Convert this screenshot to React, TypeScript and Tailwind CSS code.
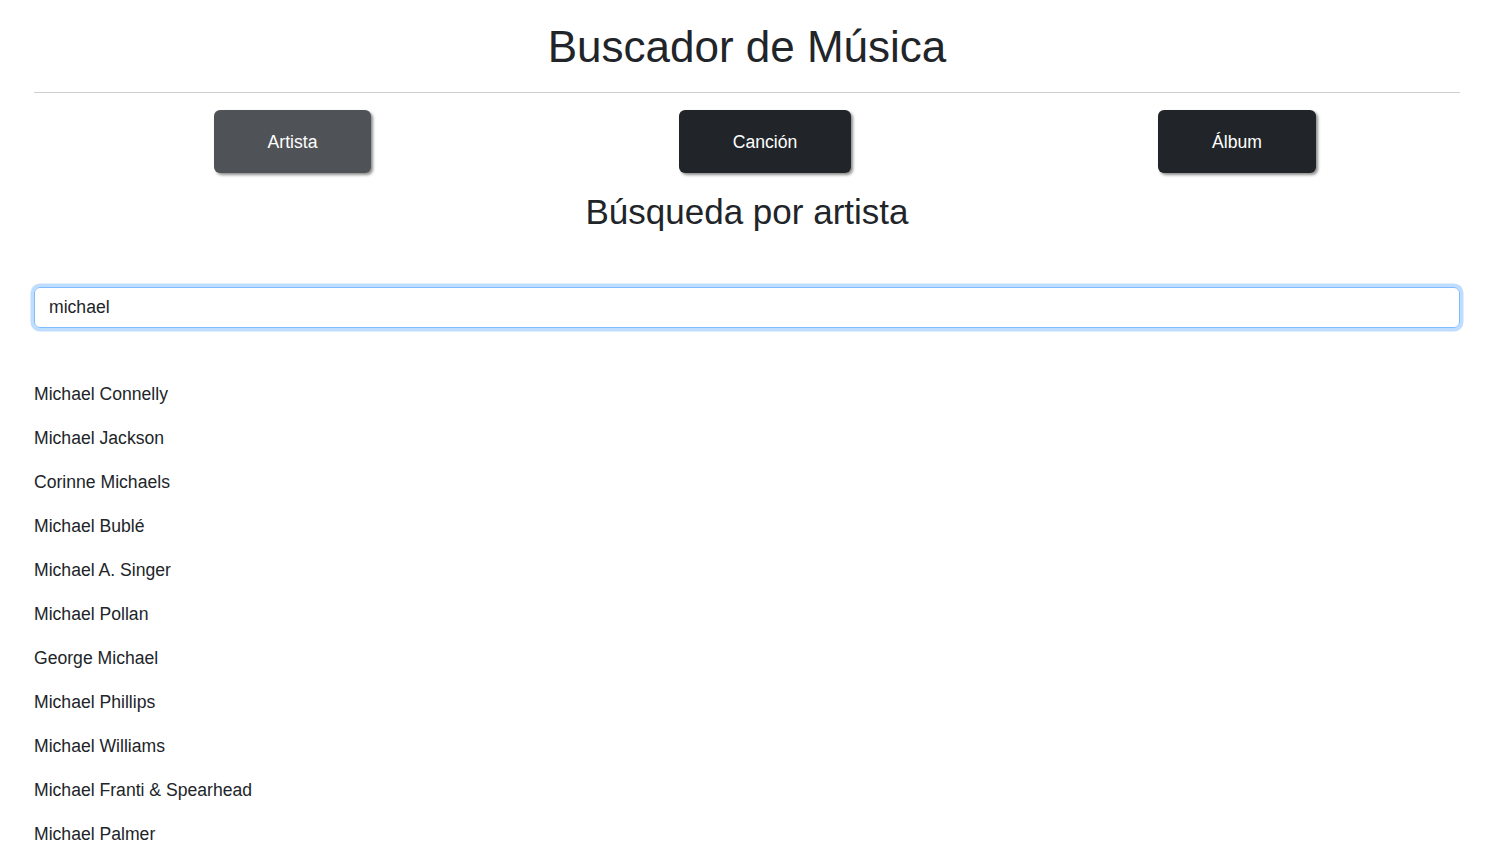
import { useState } from "react";

const ARTISTS = [
  "Michael Connelly",
  "Michael Jackson",
  "Corinne Michaels",
  "Michael Bublé",
  "Michael A. Singer",
  "Michael Pollan",
  "George Michael",
  "Michael Phillips",
  "Michael Williams",
  "Michael Franti & Spearhead",
  "Michael Palmer",
];

export default function App() {
  const [query, setQuery] = useState("michael");
  const [mode, setMode] = useState("artista");

  return (
    <div
      className="min-h-screen bg-white text-[#212529] pl-[34px] pr-[41px]"
      style={{ fontFamily: '"Liberation Sans", Arial, sans-serif' }}
    >
      {/* Header */}
      <h1 className="pt-[21px] text-center text-[44px] leading-[52px]">Buscador de Música</h1>
      <hr className="mt-[19px] border-t border-[#cfcfcf]" />

      {/* Mode buttons */}
      <div className="mt-[17px] flex pl-[180px]">
        <button
          onClick={() => setMode("artista")}
          className="h-[63px] w-[157px] rounded-[6px] bg-[#4f5256] pt-[2px] text-[17.6px] text-white shadow-[2px_2px_3px_rgba(0,0,0,0.45)]"
        >
          Artista
        </button>
        <button
          onClick={() => setMode("cancion")}
          className="ml-[308px] h-[63px] w-[172px] rounded-[6px] bg-[#212529] pt-[2px] text-[17.6px] text-white shadow-[2px_2px_3px_rgba(0,0,0,0.45)]"
        >
          Canción
        </button>
        <button
          onClick={() => setMode("album")}
          className="ml-[307px] h-[63px] w-[158px] rounded-[6px] bg-[#212529] pt-[2px] text-[17.6px] text-white shadow-[2px_2px_3px_rgba(0,0,0,0.45)]"
        >
          Álbum
        </button>
      </div>

      <h2 className="mt-[18px] text-center text-[35px] leading-[42px]">
        Búsqueda por {mode === "artista" ? "artista" : mode === "cancion" ? "canción" : "álbum"}
      </h2>

      {/* Search */}
      <input
        autoFocus
        value={query}
        onChange={(e) => setQuery(e.target.value)}
        className="mt-[54px] block h-[41px] w-full rounded-[6px] border border-[#80bdff] px-[14px] text-[17.6px] text-[#212529] shadow-[0_0_0_3.5px_rgba(0,123,255,0.25)] outline-none"
      />

      {/* Results */}
      <ul className="mt-[44px]">
        {ARTISTS.map((a) => (
          <li key={a} className="flex h-[44px] items-center text-[17.6px]">
            {a}
          </li>
        ))}
      </ul>
    </div>
  );
}
